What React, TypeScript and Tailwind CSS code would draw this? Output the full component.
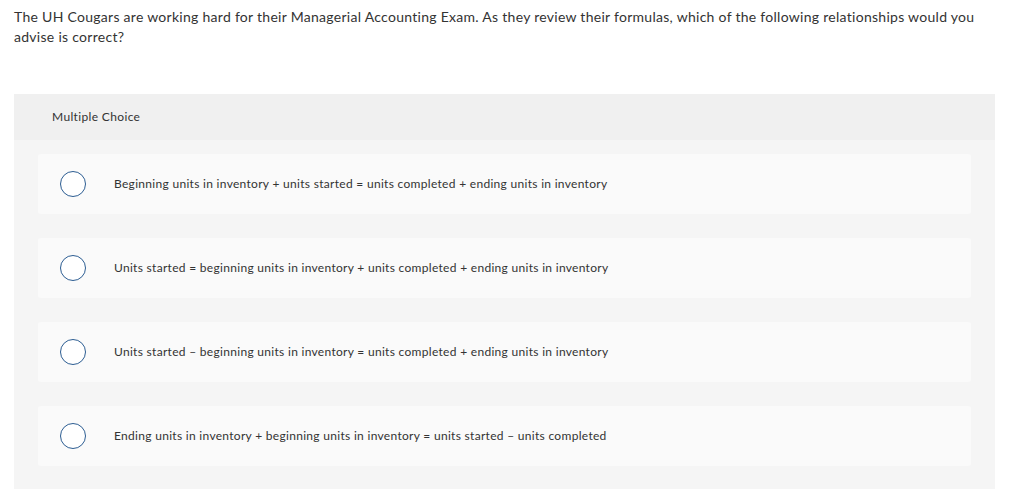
import React from "react";

const options = [
  "Beginning units in inventory + units started = units completed + ending units in inventory",
  "Units started = beginning units in inventory + units completed + ending units in inventory",
  "Units started \u2013 beginning units in inventory = units completed + ending units in inventory",
  "Ending units in inventory + beginning units in inventory = units started \u2013 units completed",
];

export default function App() {
  return (
    <div
      className="w-[1024px] h-[489px] overflow-hidden bg-white text-[#333333]"
      style={{ fontFamily: "Lato, 'Open Sans', sans-serif" }}
    >
      {/* Question */}
      <div className="px-[14px] pt-[7px] text-[14px] leading-[20px] tracking-[0.28px]">
        The UH Cougars are working hard for their Managerial Accounting Exam. As they review their formulas, which of the following relationships would you
        <br />
        advise is correct?
      </div>

      {/* Answer panel */}
      <div className="ml-[14px] mr-[29px] mt-[47px] pb-[30px] bg-[#f5f5f5] rounded-t-[2px]">
        <div className="h-[46px] bg-[#f0f0f0] flex items-center pl-[38px] text-[12px] tracking-[0.35px]">
          Multiple Choice
        </div>
        <div className="px-[24px] pt-[14px] flex flex-col gap-[24px]">
          {options.map((opt) => (
            <div
              key={opt}
              className="h-[60px] bg-[#fafafa] rounded-[3px] flex items-center"
            >
              <span className="ml-[22px] w-[26px] h-[26px] rounded-full border border-[#2c5d92] bg-white shrink-0" />
              <span className="ml-[28px] text-[12px] tracking-[0.3px]">{opt}</span>
            </div>
          ))}
        </div>
      </div>
    </div>
  );
}
